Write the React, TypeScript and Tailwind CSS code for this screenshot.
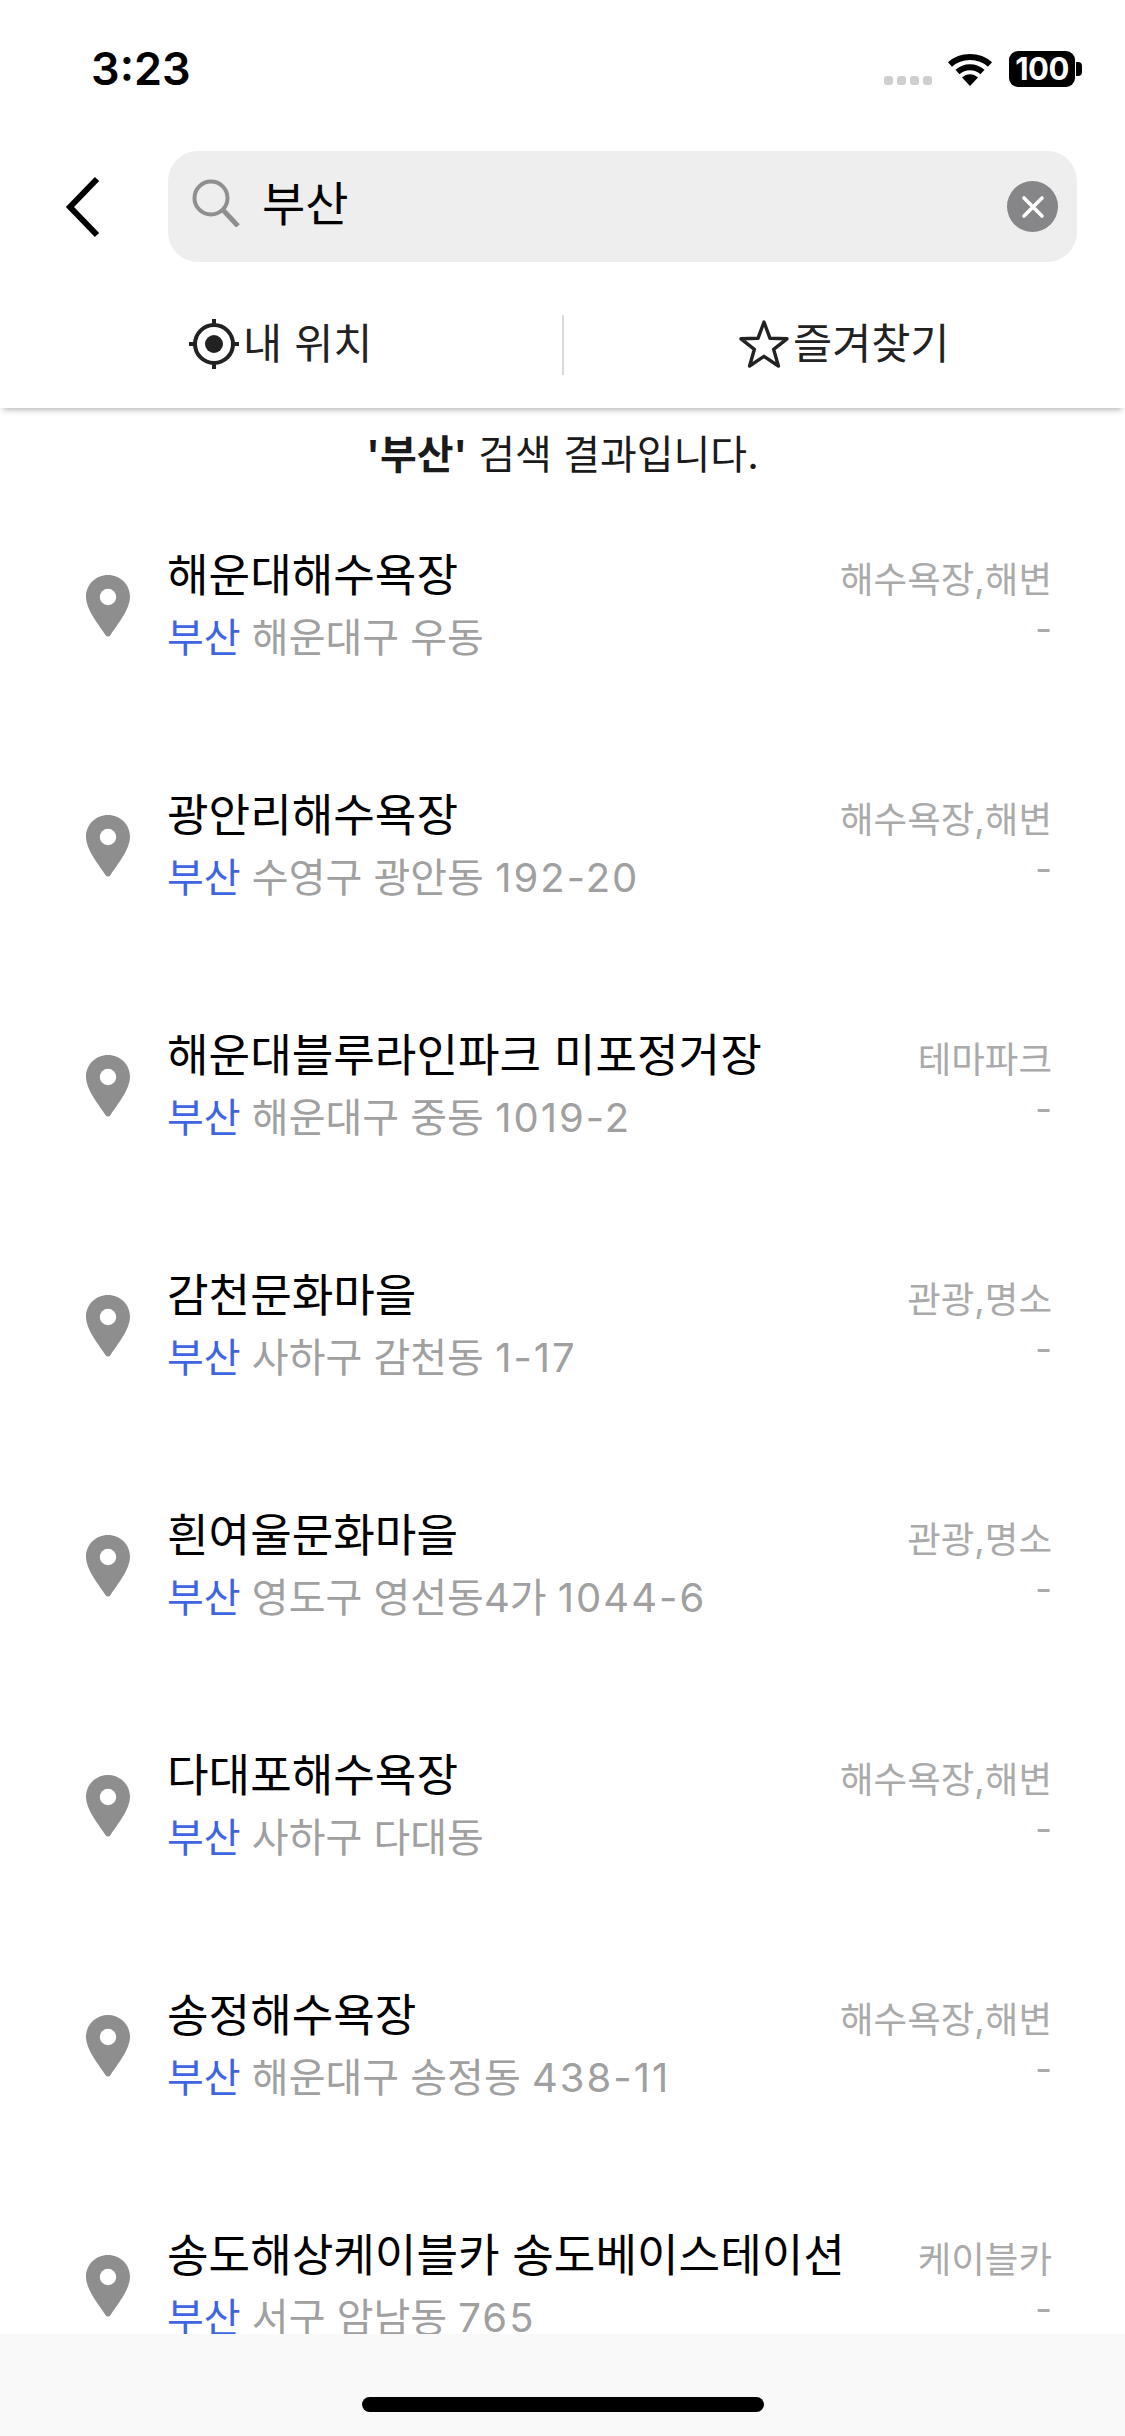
const places = [
  { name: '해운대해수욕장', addr: '해운대구 우동', no: '', cat: '해수욕장,해변' },
  { name: '광안리해수욕장', addr: '수영구 광안동', no: '192-20', cat: '해수욕장,해변' },
  { name: '해운대블루라인파크 미포정거장', addr: '해운대구 중동', no: '1019-2', cat: '테마파크' },
  { name: '감천문화마을', addr: '사하구 감천동', no: '1-17', cat: '관광,명소' },
  { name: '흰여울문화마을', addr: '영도구 영선동4가', no: '1044-6', cat: '관광,명소' },
  { name: '다대포해수욕장', addr: '사하구 다대동', no: '', cat: '해수욕장,해변' },
  { name: '송정해수욕장', addr: '해운대구 송정동', no: '438-11', cat: '해수욕장,해변' },
  { name: '송도해상케이블카 송도베이스테이션', addr: '서구 암남동', no: '765', cat: '케이블카' },
];

function Pin() {
  return (
    <svg width="44" height="62" viewBox="0 0 44 62" className="shrink-0">
      <path
        d="M22 0C9.8 0 0 9.6 0 21.8 0 35 13.5 50.5 19.6 60.2c1.2 1.8 3.6 1.8 4.8 0C30.5 50.5 44 35 44 21.8 44 9.6 34.2 0 22 0Z"
        fill="#8e8e8e"
      />
      <circle cx="22" cy="22" r="8.2" fill="#fff" />
    </svg>
  );
}

function StatusBar() {
  return (
    <div className="flex h-[151px] items-start justify-between pt-[45px] pl-[91px] pr-[43px]">
      <span className="text-[45px] leading-[48px] font-semibold text-black">3:23</span>
      <div className="flex items-start pt-[6px]">
        <div className="mt-[25px] flex gap-[4px]">
          <i className="h-[9px] w-[9px] rounded-[3px] bg-[#cfcfcf]" />
          <i className="h-[9px] w-[9px] rounded-[3px] bg-[#cfcfcf]" />
          <i className="h-[9px] w-[9px] rounded-[3px] bg-[#cfcfcf]" />
          <i className="h-[9px] w-[9px] rounded-[3px] bg-[#cfcfcf]" />
        </div>
        <svg width="46" height="34" viewBox="0 0 46 34" className="ml-[15px] mt-[1px]">
          <path d="M3 12.5C14 2.5 32 2.5 43 12.5" fill="none" stroke="#000" strokeWidth="6" />
          <path d="M10.5 20C17.5 13.5 28.5 13.5 35.5 20" fill="none" stroke="#000" strokeWidth="6" />
          <path d="M15 25.5C19.5 21 26.5 21 31 25.5L23 34Z" fill="#000" />
        </svg>
        <div className="ml-[16px] flex h-[36px] w-[66px] items-center justify-center rounded-[9px] bg-black text-[31px] font-bold tracking-[-0.5px] text-white">
          100
        </div>
        <div className="mt-[11px] ml-[1px] h-[14px] w-[6px] rounded-r-[4px] bg-black" />
      </div>
    </div>
  );
}

function SearchHeader() {
  return (
    <div className="flex items-center pl-[64px] pr-[48px]">
      <svg width="44" height="62" viewBox="0 0 44 62" className="shrink-0">
        <path d="M33 3 6 31l27 28" fill="none" stroke="#000" strokeWidth="6" />
      </svg>
      <div className="ml-[60px] flex h-[111px] flex-1 items-center rounded-[30px] bg-[#eeeeee] pl-[24px] pr-[19px]">
        <svg width="48" height="48" viewBox="0 0 48 48" className="-mt-[8px] shrink-0">
          <circle cx="19" cy="19" r="16.5" fill="none" stroke="#8f8f8f" strokeWidth="4" />
          <path d="M31 31 46 47" fill="none" stroke="#8f8f8f" strokeWidth="5" />
        </svg>
        <span className="-mt-[5px] ml-[22px] flex-1 text-[47px] leading-[56px] text-black">부산</span>
        <div className="flex h-[51px] w-[51px] items-center justify-center rounded-full bg-[#868689]">
          <svg width="24" height="24" viewBox="0 0 24 24">
            <path d="M3 3 21 21M21 3 3 21" stroke="#fff" strokeWidth="3.6" strokeLinecap="round" />
          </svg>
        </div>
      </div>
    </div>
  );
}

function Tabs() {
  return (
    <div className="relative z-10 flex h-[146px] items-start bg-white pt-[53px] shadow-[0_5px_6px_-3px_rgba(0,0,0,0.28)]">
      <div className="mt-[3px] flex flex-1 items-center justify-center text-[42.5px] leading-[52px] text-[#222222]">
        <svg width="50" height="50" viewBox="0 0 50 50" className="shrink-0">
          <circle cx="25" cy="25" r="19" fill="none" stroke="#222" strokeWidth="4" />
          <circle cx="25" cy="25" r="9" fill="#222" />
          <path d="M25 0v6M25 44v6M0 25h6M44 25h6" stroke="#222" strokeWidth="4" />
        </svg>
        <span className="ml-[4px]">내 위치</span>
      </div>
      <div className="h-[60px] w-[2px] bg-[#d9d9d9]" />
      <div className="mt-[3px] flex flex-1 items-center justify-center text-[42.5px] leading-[52px] text-[#222222]">
        <svg width="50" height="50" viewBox="0 0 50 50" className="shrink-0">
          <path
            d="M25 3 31 19.3 48 19.8 34.6 30.3 39.4 47 25 37.3 10.6 47 15.4 30.3 2 19.8 19 19.3Z"
            fill="none"
            stroke="#222"
            strokeWidth="3.4"
            strokeLinejoin="round"
          />
        </svg>
        <span className="ml-[4px]">즐겨찾기</span>
      </div>
    </div>
  );
}

function PlaceRow({ place }: { place: (typeof places)[0] }) {
  return (
    <div className="flex h-[240px] shrink-0 items-center pl-[86px] pr-[73px]">
      <Pin />
      <div className="ml-[37px] min-w-0 flex-1">
        <div className="mt-[2px] text-[45.2px] leading-[60px] whitespace-nowrap text-black">{place.name}</div>
        <div className="mt-[1px] text-[40px] leading-[62px] whitespace-nowrap text-[#a0a0a0]">
          <span className="text-[#3f66e0]">부산</span> {place.addr}{' '}
          {place.no && <span className="tracking-[2px]">{place.no}</span>}
        </div>
      </div>
      <div className="-mt-[4px] text-right text-[36.5px] text-[#aaaaaa]">
        <div className="leading-[50px]">{place.cat}</div>
        <div className="leading-[48px]">-</div>
      </div>
    </div>
  );
}

export default function App() {
  return (
    <div className="relative flex h-[2436px] w-[1125px] flex-col overflow-hidden bg-white font-['Inter','Noto_Sans_CJK_KR',sans-serif]">
      <StatusBar />
      <SearchHeader />
      <Tabs />
      <div className="h-[78px] pt-[22px] text-center text-[40px] leading-[50px] text-[#1a1a1a]">
        <b className="font-bold">'부산'</b> 검색 결과입니다.
      </div>
      {places.map(place => (
        <PlaceRow key={place.name} place={place} />
      ))}
      <div className="absolute inset-x-0 bottom-0 flex h-[102px] justify-center bg-[#f9f9f9] pt-[63px]">
        <div className="h-[15px] w-[402px] rounded-full bg-black" />
      </div>
    </div>
  );
}
